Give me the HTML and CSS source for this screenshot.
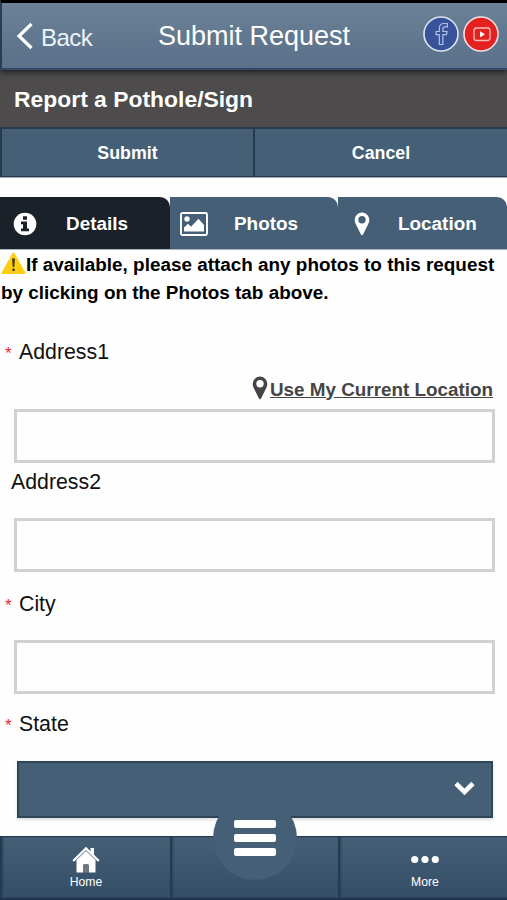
FILE: index.html
```html
<!DOCTYPE html>
<html lang="en">
<head>
<meta charset="utf-8">
<title>Submit Request</title>
<link rel="stylesheet" href="styles.css">
</head>
<body>
<div class="app">
  <header class="topbar">
    <a class="back"><svg width="18" height="28" viewBox="0 0 18 28"><path d="M15.5 2 3 14 15.5 26" fill="none" stroke="#fff" stroke-width="3.2"/></svg><span>Back</span></a>
    <h1>Submit Request</h1>
    <div class="social">
      <svg width="38" height="38" viewBox="0 0 38 38"><circle cx="19" cy="19" r="17" fill="#39539b" stroke="#dce4f2" stroke-width="1.6"/><path d="M17.300 29.500V19.700h-3.200v-3.200h3.200v-3c0-3.200 2-5 5-5h3v3.300h-2.400c-1.400 0-2 .7-2 2v2.700h4.200l-.6 3.200h-3.600v9.800z" fill="none" stroke="#b4c3e4" stroke-width="1.200"/></svg>
      <svg width="38" height="38" viewBox="0 0 38 38"><circle cx="19" cy="19" r="17" fill="#e3211f" stroke="#f4dfe3" stroke-width="1.6"/><rect x="12" y="13" width="16" height="12.500" rx="2.500" fill="none" stroke="#f8baba" stroke-width="1.300"/><path d="m18 16.200 5 3.100-5 3.100z" fill="#fff"/></svg>
    </div>
  </header>
  <h2 class="title">Report a Pothole/Sign</h2>
  <div class="actions"><button>Submit</button><button>Cancel</button></div>
  <nav class="tabs">
    <a class="tab active"><svg class="info" width="24" height="24" viewBox="0 0 24 24"><circle cx="12" cy="12" r="11.300" fill="#fff"/><path d="M10 4.300h4v3.400h-4zM8 9.500h6v7h2v2.800H8v-2.800h2v-4.200H8z" fill="#1b2129"/></svg><span>Details</span></a>
    <a class="tab photos"><svg width="28" height="24" viewBox="0 0 28 24"><rect x="1" y="1" width="26" height="22" rx="1.500" fill="none" stroke="#fff" stroke-width="1.900"/><circle cx="7" cy="7" r="2.700" fill="#fff"/><path d="M4 19.500v-4l4-3.800 3 3 7.500-8L24 13v6.500z" fill="#fff"/></svg><span>Photos</span></a>
    <a class="tab location"><svg width="16" height="24" viewBox="0 0 16 24"><path fill="#fff" fill-rule="evenodd" d="M8 .5a7.300 7.300 0 0 1 7.300 7.300c0 2-.6 3.300-1.300 4.800L9.200 22.300q-1.200 2-2.400 0L2 12.600C1.300 11.100.7 9.800.7 7.800A7.300 7.300 0 0 1 8 .5m0 3.600a3.700 3.700 0 1 0 0 7.400 3.700 3.700 0 0 0 0-7.400"/></svg><span>Location</span></a>
  </nav>
  <main>
    <p class="notice"><svg width="25" height="22" viewBox="0 0 25 22"><path d="M12.500 1.500 23.500 21h-22z" fill="#fdce12" stroke="#fdce12" stroke-width="2" stroke-linejoin="round"/><path d="M11.100 6.500h2.800l-.6 8.500h-1.600z" fill="#42390f"/><circle cx="12.500" cy="17.800" r="1.400" fill="#42390f"/></svg>If available, please attach any photos to this request<br>by clicking on the Photos tab above.</p>
    <div class="field address"><label><i>*</i>Address1</label>
      <a class="locate"><svg width="16" height="24" viewBox="0 0 16 24"><path fill="#454545" fill-rule="evenodd" d="M8 .5a7.300 7.300 0 0 1 7.300 7.300c0 2-.6 3.300-1.300 4.800L9.200 22.300q-1.200 2-2.400 0L2 12.600C1.300 11.100.7 9.800.7 7.800A7.300 7.300 0 0 1 8 .5m0 3.600a3.700 3.700 0 1 0 0 7.400 3.700 3.700 0 0 0 0-7.400"/></svg><u>Use My Current Location</u></a>
      <input type="text"></div>
    <div class="field second"><label>Address2</label><input type="text"></div>
    <div class="field city"><label><i>*</i>City</label><input type="text"></div>
    <div class="field state"><label><i>*</i>State</label>
      <div class="select"><svg width="21" height="15" viewBox="0 0 21 15"><path d="m2 2.500 8.500 8.500L19 2.500" fill="none" stroke="#fff" stroke-width="4.600"/></svg></div></div>
  </main>
  <footer class="bottombar">
    <a class="item"><svg width="28" height="27" viewBox="0 0 28 27"><path d="M4.500 14 14 5l9.500 9v12.500H17V20q0-2-3-2t-3 2v6.500H4.500z" fill="#fff"/><path d="M11 26.500V20q0-2 3-2t3 2v6.500z" fill="#6d7883"/><path d="M1.200 15 14 2.500 26.800 15" fill="none" stroke="#fff" stroke-width="2.400"/><path d="M18.500 2h3.500v7l-3.500-3z" fill="#fff"/></svg><span>Home</span></a>
    <a class="item middle"></a>
    <a class="item more"><svg width="28" height="27" viewBox="0 0 28 27"><g fill="#fff"><circle cx="3.700" cy="13.500" r="3.600"/><circle cx="14" cy="13.500" r="3.600"/><circle cx="24.300" cy="13.500" r="3.600"/></g></svg><span>More</span></a>
    <div class="menu"><b></b><b></b><b></b></div>
  </footer>
</div>
</body>
</html>
```

FILE: styles.css
```css
* { box-sizing: border-box; }
body { margin: 0; background: #fff; font-family: "Liberation Sans", sans-serif; color: #101010; }
h1, h2, p { margin: 0; }
svg { display: block; flex: none; }
.app { width: 507px; height: 900px; overflow: hidden; display: flex; flex-direction: column; background: #fefefe; }
.topbar { position: relative; flex: none; height: 70px; display: grid; grid-template-columns: 158px 1fr 86px; align-items: center; background: linear-gradient(#6a8197, #5b7089); border-top: 3px solid #000; border-bottom: 2px solid #334965; border-left: 2px solid #2a3d50; box-shadow: 0 2px 6px #1c1c1c; z-index: 1; color: #fff; }
.back { display: flex; align-items: center; gap: 7px; padding-left: 14px; font-size: 24px; color: #edf3fb; }
.back svg { margin-top: 1px; }
.back span { padding-top: 4px; letter-spacing: -.5px; }
h1 { font-size: 27px; font-weight: 400; line-height: 32px; padding: 1px 0 0; margin-left: -2px; white-space: nowrap; }
.social { display: flex; gap: 2px; margin-left: 1px; }
.social svg { margin-top: -4px; }
.title { flex: none; height: 57px; background: #4d4b4c; color: #fff; font-size: 22.900px; line-height: 58px; padding-left: 14px; }
.actions { flex: none; height: 51px; display: grid; grid-template-columns: 253px 254px; border-bottom: 1px solid #9ca8b2; }
button { margin: 0; padding: 0; border: solid #283a4b; border-width: 2px 0 1px 2px; background: #455f77; color: #fff; font: bold 17.800px/46px "Liberation Sans", sans-serif; }
.tabs { flex: none; height: 53px; margin-top: 19px; display: grid; grid-template-columns: 170px 168px 169px; border-bottom: 1px solid #a8b3bd; }
.tab { display: flex; align-items: center; padding: 2px 0 0 13px; background: #455f77; border-top-right-radius: 10px; color: #fff; font-size: 18.900px; font-weight: bold; }
.tab.active { background: #1b2129; }
.tab span { margin-left: 29px; }
.tab.photos { padding-left: 10px; }
.tab.photos span { margin-left: 26px; }
.tab.location { padding-left: 16px; }
.tab.location span { margin-left: 28px; }
main { flex: none; height: 586px; }
.notice { padding: 1px 0 0 1px; height: 58px; font-size: 18.900px; font-weight: bold; line-height: 28px; white-space: nowrap; color: #000; }
.notice svg { display: inline-block; vertical-align: -3px; }
.field { display: flex; flex-direction: column; }
label { display: flex; align-items: center; height: 30px; padding-left: 5px; font-size: 21.300px; }
label i { width: 14px; font-style: normal; font-size: 17px; line-height: 20px; color: #ee2733; padding-top: 3px; }
input { width: 481px; height: 54px; margin: 0 0 0 14px; border: 3px solid #d1d1d1; background: #fefefe; padding: 0; border-radius: 0; }
.address { height: 155px; padding-top: 29px; }
.locate { align-self: flex-end; display: flex; align-items: center; height: 27px; margin: 9px 14px 6px 0; gap: 2px; color: #454545; font-size: 18.850px; font-weight: bold; }
.locate svg { margin-top: -3px; }
.second { height: 111px; padding-top: 4px; }
.second label { padding-left: 11px; margin-bottom: 21px; }
.city { height: 120px; padding-top: 15px; }
.city label { margin-bottom: 21px; }
.state { padding-top: 15px; }
.state label { margin-bottom: 22px; }
.select { height: 57px; margin: 0 14px 0 17px; background: #455f77; border: 2px solid #2f4559; display: flex; align-items: center; justify-content: flex-end; padding-right: 16px; box-shadow: 0 2px 3px #0002; }
.select svg { margin-top: -2px; }
.bottombar { position: relative; flex: none; height: 64px; display: grid; grid-template-columns: 170px 168px 169px; background: linear-gradient(#455f77, #344e67); border-top: 1px solid #26394b; border-bottom: 2px solid #1f344c; color: #fff; }
.item { display: flex; flex-direction: column; align-items: center; padding: 9px 0 0; font-size: 12.200px; line-height: 16px; border-left: 2px solid #263b51; box-shadow: inset 1px 0 2px #2c4259; }
.item.more { padding-left: 3px; }
.item span { margin-top: 1px; }
.menu { position: absolute; left: 213px; top: -41px; width: 84px; height: 84px; border-radius: 50%; background: #455f77; display: flex; flex-direction: column; align-items: center; justify-content: center; gap: 6px; padding-bottom: 1px; }
.menu b { width: 42px; height: 8px; border-radius: 2px; background: #fff; }
```
